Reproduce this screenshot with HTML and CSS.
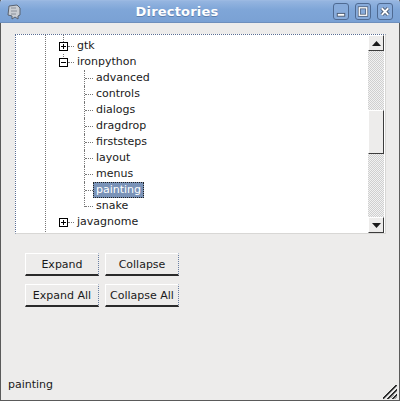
FILE: index.html
```html
<!DOCTYPE html>
<html>
<head>
<meta charset="utf-8">
<link rel="stylesheet" href="styles.css">
</head>
<body>
<div class="window">
  <div class="titlebar">
    <svg class="app-icon" width="14" height="16" viewBox="0 0 14 16">
      <path d="M2 2 L10 1 L13 4 L13 11 L11 12 L11 15 L8 13 L5 15 L5 12 L1 11 Z" fill="#c9cdd3" stroke="#596270" stroke-width="1"/>
      <path d="M4 4 L9 4 M4 7 L10 7 M4 10 L9 10" stroke="#8a909a" stroke-width="1"/>
    </svg>
    <div class="title">Directories</div>
    <div class="wbtns">
      <div class="wbtn"><svg width="15" height="16" viewBox="0 0 15 16"><rect x="3.5" y="9.5" width="8" height="3" fill="#fff" stroke="#4b5a72" stroke-width="1"/></svg></div>
      <div class="wbtn"><svg width="15" height="16" viewBox="0 0 15 16"><rect x="3.5" y="3.5" width="8" height="8" fill="none" stroke="#4b5a72" stroke-width="3"/><rect x="3.5" y="3.5" width="8" height="8" fill="none" stroke="#fff" stroke-width="1.4"/></svg></div>
      <div class="wbtn"><svg width="15" height="16" viewBox="0 0 15 16"><path d="M4 4 L11 11 M11 4 L4 11" stroke="#4b5a72" stroke-width="4"/><path d="M4 4 L11 11 M11 4 L4 11" stroke="#fff" stroke-width="2"/></svg></div>
    </div>
  </div>
  <div class="content">
    <div class="tree">
      <div class="tree-body">
        <div class="row top">
          <span class="indent"></span>
          <span class="exp plus"><i></i></span>
          <span class="label">gtk</span>
        </div>
        <div class="row mid">
          <span class="indent"></span>
          <span class="exp minus"><i></i></span>
          <span class="label">ironpython</span>
        </div>
        <div class="row child"><span class="indent2"></span><span class="conn"></span><span class="label">advanced</span></div>
        <div class="row child"><span class="indent2"></span><span class="conn"></span><span class="label">controls</span></div>
        <div class="row child"><span class="indent2"></span><span class="conn"></span><span class="label">dialogs</span></div>
        <div class="row child"><span class="indent2"></span><span class="conn"></span><span class="label">dragdrop</span></div>
        <div class="row child"><span class="indent2"></span><span class="conn"></span><span class="label">firststeps</span></div>
        <div class="row child"><span class="indent2"></span><span class="conn"></span><span class="label">layout</span></div>
        <div class="row child"><span class="indent2"></span><span class="conn"></span><span class="label">menus</span></div>
        <div class="row child"><span class="indent2"></span><span class="conn"></span><span class="label selected">painting</span></div>
        <div class="row child last"><span class="indent2"></span><span class="conn"></span><span class="label">snake</span></div>
        <div class="row">
          <span class="indent"></span>
          <span class="exp plus"><i></i></span>
          <span class="label">javagnome</span>
        </div>
      </div>
      <div class="scrollbar">
        <div class="sb-btn"><svg width="9" height="5" viewBox="0 0 9 5"><path d="M0 5 L4.5 0 L9 5 Z" fill="#1a1a1a"/></svg></div>
        <div class="sb-track"></div>
        <div class="sb-thumb"></div>
        <div class="sb-track grow"></div>
        <div class="sb-btn"><svg width="9" height="5" viewBox="0 0 9 5"><path d="M0 0 L9 0 L4.5 5 Z" fill="#1a1a1a"/></svg></div>
      </div>
    </div>
    <div class="buttons">
      <button class="btn">Expand</button>
      <button class="btn">Collapse</button>
      <button class="btn">Expand All</button>
      <button class="btn">Collapse All</button>
    </div>
    <div class="spacer"></div>
    <div class="status">
      <span class="status-text">painting</span>
      <div class="grip"></div>
    </div>
  </div>
</div>
</body>
</html>
```

FILE: styles.css
```css
* { box-sizing: border-box; }
html, body { margin: 0; padding: 0; }
body {
  width: 400px;
  height: 401px;
  font-family: "DejaVu Sans", sans-serif;
  font-size: 11px;
  color: #1a1a1a;
  background: #edeceb;
}
.window {
  width: 400px;
  height: 401px;
  display: flex;
  flex-direction: column;
  background: #edeceb;
  border-left: 1px solid #5a5a5a;
  border-right: 1px solid #5a5a5a;
  border-bottom: 1px solid #5a5a5a;
}
.titlebar {
  height: 23px;
  flex: none;
  margin: 0 -1px;
  display: flex;
  align-items: center;
  background: linear-gradient(#95b5e0, #7fa6d8 40%, #7aa1d4);
  border-top: 1px solid #9bb9e2;
  border-bottom: 1px solid #6e8fbd;
  border-radius: 3px 3px 0 0;
  padding: 0 7px 0 7px;
}
.app-icon { flex: none; }
.title {
  flex: 1;
  text-align: center;
  color: #fff;
  font-weight: bold;
  font-size: 13px;
  letter-spacing: 0.2px;
  text-shadow: 0 1px 0 #5d7fae;
}
.wbtns { display: flex; gap: 6px; }
.wbtn {
  width: 16px;
  height: 17px;
  border: 1px solid #4f6a92;
  border-radius: 3px;
  background: #87abdb;
  display: flex;
  align-items: center;
  justify-content: center;
}
.wbtn svg { display: block; }
.content {
  flex: 1;
  min-height: 0;
  display: flex;
  flex-direction: column;
  padding: 11px 13px 0 14px;
}
.tree {
  height: 200px;
  width: 371px;
  flex: none;
  display: flex;
  background: #fff;
  border-top: 1px dotted #5b6f95;
  border-left: 1px dotted #5b6f95;
  border-right: 1px solid #d8d7d5;
  border-bottom: 1px solid #d8d7d5;
}
.tree-body {
  flex: 1;
  overflow: hidden;
  padding-top: 3px;
  background-image: repeating-linear-gradient(to bottom, #777 0 1px, transparent 1px 2px);
  background-size: 1px 100%;
  background-position: 29px 0;
  background-repeat: no-repeat;
}
.row {
  height: 16px;
  display: flex;
  align-items: center;
  white-space: nowrap;
}
.indent { width: 43px; flex: none; }
.exp {
  width: 15px;
  height: 16px;
  flex: none;
  position: relative;
  display: flex;
  align-items: center;
}
.exp::before {
  content: "";
  position: absolute;
  left: 9px;
  top: 8px;
  width: 6px;
  border-top: 1px dotted #777;
}
.row.top .exp::after {
  content: "";
  position: absolute;
  left: 4px;
  top: -3px;
  height: 7px;
  border-left: 1px dotted #777;
}
.row.mid .exp::after {
  content: "";
  position: absolute;
  left: 4px;
  top: 0;
  height: 3px;
  border-left: 1px dotted #777;
}
.exp i {
  position: relative;
  z-index: 1;
  display: block;
  width: 9px;
  height: 9px;
  border: 1px solid #000;
  background: #fff;
}
.exp i::before {
  content: "";
  position: absolute;
  left: 1px;
  top: 3px;
  width: 5px;
  height: 1px;
  background: #000;
}
.exp.plus i::after {
  content: "";
  position: absolute;
  left: 3px;
  top: 1px;
  width: 1px;
  height: 5px;
  background: #000;
}
.label {
  padding: 0 3px;
  height: 16px;
  line-height: 16px;
}
.indent2 { width: 68px; flex: none; }
.conn {
  width: 9px;
  height: 16px;
  flex: none;
  position: relative;
}
.conn::before {
  content: "";
  position: absolute;
  left: 0;
  top: 0;
  height: 16px;
  border-left: 1px dotted #777;
}
.row.last .conn::before { height: 9px; }
.conn::after {
  content: "";
  position: absolute;
  left: 1px;
  top: 8px;
  width: 8px;
  border-top: 1px dotted #777;
}
.label.selected {
  background: #7a93b8;
  color: #fff;
  outline: 1px dotted #222;
  outline-offset: -1px;
}
.scrollbar {
  width: 16px;
  flex: none;
  display: flex;
  flex-direction: column;
  margin-right: 1px;
}
.sb-btn {
  height: 16px;
  flex: none;
  background: #edeceb;
  border-top: 1px solid #fff;
  border-left: 1px solid #fff;
  border-right: 1px solid #3c3c3c;
  border-bottom: 1px solid #3c3c3c;
  display: flex;
  align-items: center;
  justify-content: center;
}
.sb-track {
  height: 59px;
  flex: none;
  background-color: #f2f2f2;
  background-image:
    linear-gradient(45deg, #cfcfcf 25%, transparent 25%, transparent 75%, #cfcfcf 75%),
    linear-gradient(45deg, #cfcfcf 25%, transparent 25%, transparent 75%, #cfcfcf 75%);
  background-size: 2px 2px;
  background-position: 0 0, 1px 1px;
}
.sb-track.grow { flex: 1; height: auto; }
.sb-thumb {
  height: 44px;
  flex: none;
  background: #edeceb;
  border-top: 1px solid #fff;
  border-left: 1px solid #fff;
  border-right: 1px solid #3c3c3c;
  border-bottom: 1px solid #3c3c3c;
}
.buttons {
  flex: none;
  margin: 19px 0 0 10px;
  display: grid;
  grid-template-columns: 74px 74px;
  grid-auto-rows: 23px;
  column-gap: 6px;
  row-gap: 8px;
}
.btn {
  font-family: "DejaVu Sans", sans-serif;
  font-size: 11px;
  color: #1a1a1a;
  background: #edeceb;
  border: none;
  border-top: 1px solid #fff;
  border-left: 1px solid #fff;
  border-right: 1px dotted #6a7fa2;
  border-bottom: 2px solid #2a2a2a;
  padding: 0;
  margin: 0;
}
.spacer { flex: 1; }
.status {
  height: 24px;
  flex: none;
  display: flex;
  align-items: flex-start;
  margin-left: -7px;
  margin-right: -12px;
  padding-top: 2px;
}
.status-text { flex: 1; line-height: 14px; }
.grip {
  flex: none;
  width: 14px;
  height: 14px;
  margin-top: 7px;
  margin-right: 1px;
  background: linear-gradient(135deg,
    transparent 0 46%, #2e2e2e 46% 53%, #a8a8a8 53% 57%,
    transparent 57% 64%, #2e2e2e 64% 71%, #a8a8a8 71% 75%,
    transparent 75% 82%, #2e2e2e 82% 89%, #a8a8a8 89% 93%,
    transparent 93%);
}
```
